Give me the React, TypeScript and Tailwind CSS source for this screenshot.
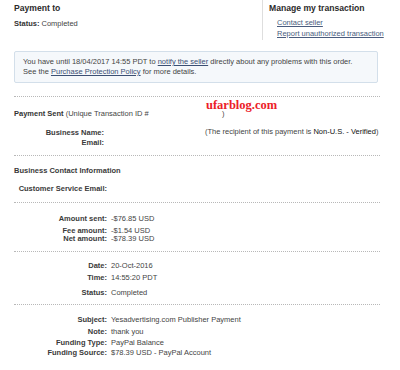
import React from "react";

function Row({
  label,
  value,
  className = "",
  labelW = "w-[93px]",
}: {
  label: string;
  value?: React.ReactNode;
  className?: string;
  labelW?: string;
}) {
  return (
    <div className={"flex h-[10px] items-center leading-[10px] " + className}>
      <div className={labelW + " shrink-0 text-right font-bold text-[#3a3a3a]"}>{label}</div>
      <div className="ml-[4px] whitespace-nowrap text-[#444]">{value}</div>
    </div>
  );
}

function Dots({ className = "" }: { className?: string }) {
  return <div className={"h-0 w-[366px] border-t border-dotted border-[#b8b8b8] " + className} />;
}

export default function App() {
  return (
    <div className="relative h-[370px] w-[400px] overflow-hidden bg-white pl-[14px] font-[family-name:Liberation_Sans,Arial,sans-serif] text-[7.5px] text-[#444]">
      {/* header */}
      <div className="flex h-[40px]">
        <div className="w-[248px]">
          <div className="mt-[3px] h-[11px] text-[8.6px] font-bold leading-[11px] text-[#2b2b2b]">Payment to</div>
          <div className="mt-[5px] h-[10px] leading-[10px]">
            <span className="font-bold text-[#333]">Status:</span> <span>Completed</span>
          </div>
        </div>
        <div className="h-[40px] border-l border-[#dedede] pl-[6px]">
          <div className="mt-[3px] h-[11px] text-[8.6px] font-bold leading-[11px] text-[#2b2b2b]">Manage my transaction</div>
          <div className="mt-[4px] h-[10px] pl-[8px] leading-[10px] text-[#4a5c7e] underline">Contact seller</div>
          <div className="mt-[1px] h-[10px] pl-[8px] leading-[10px] text-[#4a5c7e] underline">Report unauthorized transaction</div>
        </div>
      </div>

      {/* info box */}
      <div className="mt-[11px] h-[32px] w-[364px] rounded-[2px] border border-[#d3dfea] bg-[#f5f8fb] pl-[8px] pt-[5px] leading-[10px] text-[#444]">
        <div className="whitespace-nowrap">
          You have until 18/04/2017 14:55 PDT to <span className="text-[#3b4f73] underline">notify the seller</span> directly about any problems with this order.
        </div>
        <div className="whitespace-nowrap">
          See the <span className="text-[#3b4f73] underline">Purchase Protection Policy</span> for more details.
        </div>
      </div>

      <Dots className="mt-[13px]" />

      {/* payment sent */}
      <div className="mt-[12px] flex h-[10px] items-center leading-[10px]">
        <div className="w-[208px] shrink-0 whitespace-nowrap">
          <span className="font-bold text-[#333]">Payment Sent</span> (Unique Transaction ID #
        </div>
        <div>)</div>
      </div>
      <div className="mt-[9px] flex h-[10px] items-center leading-[10px]">
        <div className="w-[90px] shrink-0 text-right font-bold text-[#3a3a3a]">Business Name:</div>
        <div className="ml-[101px] -mt-[3px] whitespace-nowrap">
          (The recipient of this payment is <span className="text-[#111]">Non-U.S. - Verified</span>)
        </div>
      </div>
      <Row label="Email:" labelW="w-[90px]" />

      <Dots className="mt-[7px]" />

      <div className="mt-[10px] h-[10px] font-bold leading-[10px] text-[#3a3a3a]">Business Contact Information</div>
      <Row label="Customer Service Email:" className="mt-[8px]" />

      <Dots className="mt-[8px]" />

      <Row label="Amount sent:" value="-$76.85 USD" className="mt-[11px]" />
      <div className="mt-[3px] flex h-[8px] items-center leading-[8px]">
        <div className="w-[93px] shrink-0 text-right font-bold text-[#3a3a3a]">Fee amount:</div>
        <div className="ml-[4px] whitespace-nowrap">-$1.54 USD</div>
      </div>
      <div className="flex h-[8px] items-center leading-[8px]">
        <div className="w-[93px] shrink-0 text-right font-bold text-[#3a3a3a]">Net amount:</div>
        <div className="ml-[4px] whitespace-nowrap">-$78.39 USD</div>
      </div>

      <Dots className="mt-[8px]" />

      <Row label="Date:" value="20-Oct-2016" className="mt-[9px]" />
      <Row label="Time:" value="14:55:20 PDT" className="mt-[2px]" />
      <Row label="Status:" value="Completed" className="mt-[5px]" />

      <Dots className="mt-[6px]" />

      <Row label="Subject:" value="Yesadvertising.com Publisher Payment" className="mt-[10px]" />
      <Row label="Note:" value="thank you" className="mt-[2px]" />
      <Row label="Funding Type:" value="PayPal Balance" className="mt-[1px]" />
      <Row label="Funding Source:" value="$78.39 USD - PayPal Account" />

      {/* watermark */}
      <div className="absolute left-[206px] top-[97px] font-[family-name:Liberation_Serif,Times_New_Roman,serif] text-[12.5px] font-bold leading-[16px] text-[#ec2027]">
        ufarblog.com
      </div>
    </div>
  );
}
